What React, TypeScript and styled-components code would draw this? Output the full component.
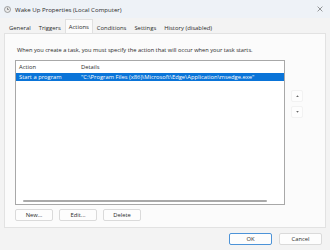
import styled, { createGlobalStyle } from "styled-components";

const GlobalStyle = createGlobalStyle`
  html, body {
    margin: 0;
    padding: 0;
    background: #f0f0f0;
  }
  * { box-sizing: border-box; }
`;

const Window = styled.div`
  width: 330px;
  height: 250px;
  display: flex;
  flex-direction: column;
  background: #f3f3f3;
  font-family: "Open Sans", "Noto Sans", sans-serif;
  font-size: 6px;
  color: #2a2a2a;
  overflow: hidden;
`;

const TitleBar = styled.div`
  height: 18px;
  display: flex;
  align-items: center;
  padding: 0 6px 0 4px;
  gap: 4px;
  background: #eef2f7;
`;

const Title = styled.div`
  flex: 1;
  font-size: 6.1px;
  color: #2a2a2a;
`;

const CloseButton = styled.div`
  width: 8px;
  height: 8px;
  display: flex;
  align-items: center;
  justify-content: center;
`;

const TabStrip = styled.div`
  height: 15px;
  display: flex;
  align-items: flex-end;
  padding: 0 5px;
`;

const Tab = styled.div<{ $active?: boolean }>`
  height: ${(p) => (p.$active ? "14px" : "12px")};
  display: flex;
  align-items: center;
  padding: 0 3px;
  font-size: 5.9px;
  color: #2a2a2a;
  background: ${(p) => (p.$active ? "#fbfbfb" : "transparent")};
  border: 1px solid ${(p) => (p.$active ? "#e0e0e0" : "transparent")};
  border-bottom: none;
`;

const TabPanel = styled.div`
  margin: 0 4px;
  height: 195px;
  background: #fbfbfb;
  border: 1px solid #e2e2e2;
  display: flex;
  flex-direction: column;
  padding: 12px 10px 0 10px;
`;

const Instruction = styled.div`
  padding-left: 2px;
  font-size: 5.7px;
  color: #2a2a2a;
  height: 10px;
`;

const ListRow = styled.div`
  display: flex;
  gap: 6px;
  margin-top: 4px;
`;

const ListBox = styled.div`
  width: 270px;
  height: 145px;
  background: #fff;
  border: 1px solid #a8a8a8;
  display: flex;
  flex-direction: column;
  padding-top: 2px;
`;

const Row = styled.div<{ $selected?: boolean }>`
  height: 8px;
  display: flex;
  align-items: center;
  color: ${(p) => (p.$selected ? "#fff" : "#2a2a2a")};
  background: ${(p) => (p.$selected ? "#0a74d8" : "transparent")};
  white-space: nowrap;
  font-size: 5.8px;
`;

const ActionCell = styled.div`
  width: 65px;
  padding-left: 3px;
`;

const DetailsCell = styled.div`
  flex: 1;
`;

const Spacer = styled.div`
  height: 2px;
`;

const ListBody = styled.div`
  flex: 1;
`;

const ScrollBar = styled.div`
  height: 2px;
  margin: 0 17px 2px 7px;
  background: #a9a9a9;
  border-radius: 1px;
`;

const SideButtons = styled.div`
  display: flex;
  flex-direction: column;
  gap: 4px;
  padding-top: 30px;
`;

const ArrowButton = styled.div`
  width: 12px;
  height: 12px;
  display: flex;
  align-items: center;
  justify-content: center;
  background: #fdfdfd;
  border: 1px solid #f2f2f2;
  border-radius: 2px;
`;

const ButtonRow = styled.div`
  display: flex;
  gap: 6px;
  margin-top: 4px;
`;

const Button = styled.div<{ $default?: boolean }>`
  width: 38px;
  height: 12px;
  display: flex;
  align-items: center;
  justify-content: center;
  font-size: 5.8px;
  color: #2a2a2a;
  background: #fdfdfd;
  border: 1px solid ${(p) => (p.$default ? "#4c93d8" : "#dadada")};
  border-radius: 2px;
`;

const Footer = styled.div`
  display: flex;
  justify-content: flex-end;
  gap: 7px;
  padding: 5px 8px 0 0;
`;

const WideButton = styled(Button)`
  width: 43px;
`;

const ClockIcon = () => (
  <svg width="7" height="7" viewBox="0 0 14 14">
    <circle cx="7" cy="7" r="6" fill="#e8e8e8" stroke="#7a7a7a" strokeWidth="1.3" />
    <path d="M7 3.5V7H9.5" fill="none" stroke="#555" strokeWidth="1.3" />
  </svg>
);

const CloseIcon = () => (
  <svg width="6" height="6" viewBox="0 0 10 10">
    <path d="M1 1L9 9M9 1L1 9" stroke="#555" strokeWidth="1" />
  </svg>
);

const Arrow = ({ up }: { up?: boolean }) => (
  <svg width="3" height="2" viewBox="0 0 4 3">
    <path d={up ? "M0 3L2 0.5L4 3Z" : "M0 0L2 2.5L4 0Z"} fill="#666" />
  </svg>
);

const tabs = ["General", "Triggers", "Actions", "Conditions", "Settings", "History (disabled)"];

export default function App() {
  return (
    <>
      <GlobalStyle />
      <Window>
        <TitleBar>
          <ClockIcon />
          <Title>Wake Up Properties (Local Computer)</Title>
          <CloseButton>
            <CloseIcon />
          </CloseButton>
        </TitleBar>
        <TabStrip>
          {tabs.map((t) => (
            <Tab key={t} $active={t === "Actions"}>
              {t}
            </Tab>
          ))}
        </TabStrip>
        <TabPanel>
          <Instruction>
            When you create a task, you must specify the action that will occur when your task starts.
          </Instruction>
          <ListRow>
            <ListBox>
              <Row>
                <ActionCell>Action</ActionCell>
                <DetailsCell>Details</DetailsCell>
              </Row>
              <Spacer />
              <Row $selected>
                <ActionCell>Start a program</ActionCell>
                <DetailsCell>"C:\Program Files (x86)\Microsoft\Edge\Application\msedge.exe"</DetailsCell>
              </Row>
              <ListBody />
              <ScrollBar />
            </ListBox>
            <SideButtons>
              <ArrowButton>
                <Arrow up />
              </ArrowButton>
              <ArrowButton>
                <Arrow />
              </ArrowButton>
            </SideButtons>
          </ListRow>
          <ButtonRow>
            <Button>New...</Button>
            <Button>Edit...</Button>
            <Button>Delete</Button>
          </ButtonRow>
        </TabPanel>
        <Footer>
          <WideButton $default>OK</WideButton>
          <WideButton>Cancel</WideButton>
        </Footer>
      </Window>
    </>
  );
}
